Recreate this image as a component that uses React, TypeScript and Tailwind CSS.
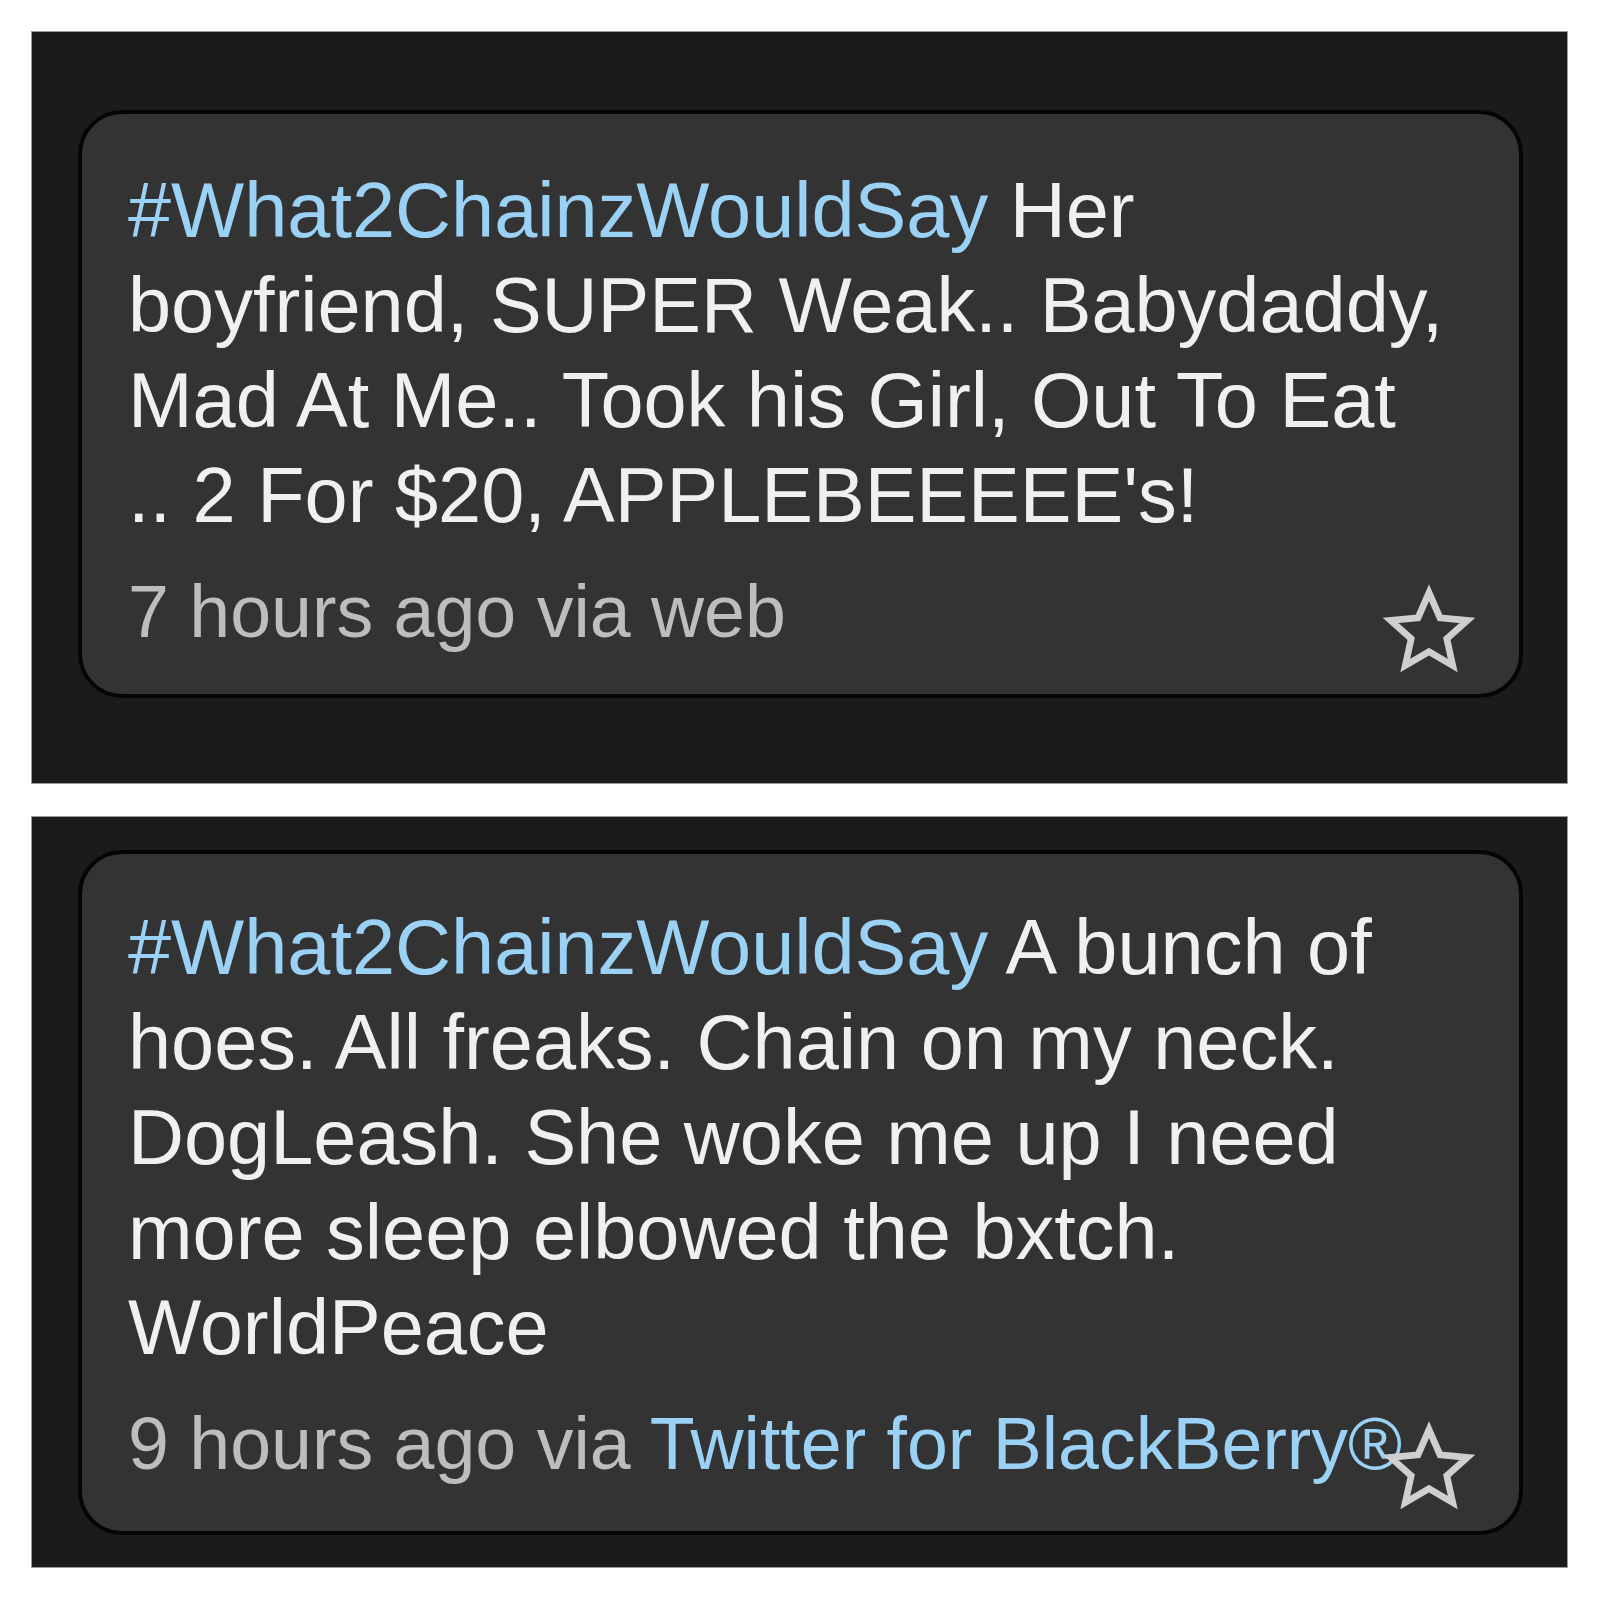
const tweets = [
  {
    tag: "#What2ChainzWouldSay",
    body: " Her boyfriend, SUPER Weak.. Babydaddy, Mad At Me.. Took his Girl, Out To Eat .. 2 For $20, APPLEBEEEEE's!",
    time: "7 hours ago via",
    source: "web",
    sourceLink: false,
  },
  {
    tag: "#What2ChainzWouldSay",
    body: " A bunch of hoes. All freaks. Chain on my neck. DogLeash. She woke me up I need more sleep elbowed the bxtch. WorldPeace",
    time: "9 hours ago via",
    source: "Twitter for BlackBerry®",
    sourceLink: true,
  },
]

function Star() {
  return (
    <svg
      viewBox="0 0 100 100"
      className="absolute right-[42px] bottom-[15px] h-[96px] w-[96px]"
    >
      <polygon
        points="50,10 61.46,36.22 89.94,39.02 68.55,58.03 74.69,85.98 50,71.5 25.31,85.98 31.45,58.03 10.06,39.02 38.54,36.22"
        fill="none"
        stroke="#cfcfcf"
        strokeWidth="7"
        strokeLinejoin="miter"
      />
    </svg>
  )
}

function TweetCard({ t, top }: { t: (typeof tweets)[number]; top: boolean }) {
  return (
    <div
      className={
        top
          ? "relative rounded-[44px] border-4 border-[#050505] bg-[#333333] pl-[46px] pr-[71px] pt-[49px] pb-[35px]"
          : "relative rounded-[44px] border-4 border-[#050505] bg-[#333333] pl-[46px] pr-[71px] pt-[46px] pb-[40px]"
      }
    >
      <p className="text-[77.5px] leading-[95px] text-[#f0f0f0]">
        <span className="text-[#9ad1f5]">{t.tag}</span>
        {t.body}
      </p>
      <p className="mt-[21px] whitespace-nowrap text-[73.5px] leading-[95px] text-[#bdbdbd]">
        {t.time}{" "}
        <span className={t.sourceLink ? "text-[#9ad1f5]" : ""}>{t.source}</span>
      </p>
      <Star />
    </div>
  )
}

export default function App() {
  return (
    <div
      className="flex h-[1600px] w-[1600px] flex-col gap-[32px] bg-white pl-[31px] pr-[32px] pt-[31px]"
      style={{ fontFamily: '"Liberation Sans", Arial, Helvetica, sans-serif' }}
    >
      {/* top panel */}
      <div className="h-[753px] border border-[#9a9a9a] bg-[#1b1b1b] pl-[46px] pr-[44px] pt-[78px]">
        <TweetCard t={tweets[0]} top />
      </div>

      {/* bottom panel */}
      <div className="h-[752px] border border-[#9a9a9a] bg-[#1b1b1b] pl-[46px] pr-[44px] pt-[33px]">
        <TweetCard t={tweets[1]} top={false} />
      </div>
    </div>
  )
}
